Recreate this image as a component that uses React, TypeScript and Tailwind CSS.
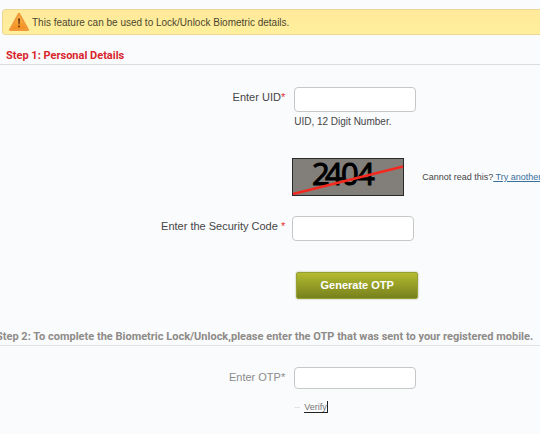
import type { ReactNode } from 'react'

const FIELD = 'block w-[122px] rounded-[4px] border border-[#c6c8c8] bg-white px-2 text-xs text-[#333] outline-none focus:border-[#8a9a2a]'
const HEADING = 'whitespace-nowrap border-b font-[Roboto,Arial,sans-serif] text-[11px] font-bold leading-4'

/** One form line: right-aligned label on the left, control on the right. */
function Row({ label, className = '', children }: { label?: ReactNode; className?: string; children: ReactNode }) {
  return (
    <div className={`grid grid-cols-[53%_minmax(0,1fr)] items-start ${className}`}>
      <div className="pr-px text-right text-[11px] leading-5">{label}</div>
      <div className="min-w-0">{children}</div>
    </div>
  )
}

function WarningIcon() {
  return (
    <svg width="22" height="20" viewBox="0 0 22 20" aria-hidden="true" className="shrink-0">
      <defs>
        <linearGradient id="warn" x1="0" y1="0" x2="0" y2="1">
          <stop offset="0" stopColor="#fdbe55" />
          <stop offset="1" stopColor="#f28a1c" />
        </linearGradient>
      </defs>
      <path d="M11 1.8 L20 17.8 H2 Z" fill="url(#warn)" stroke="#f09a3a" strokeWidth="2.2" strokeLinejoin="round" />
      <path d="M10.1 6.4 H12 L11.5 12.4 H10.6 Z" fill="#5a2c08" />
      <circle cx="11.05" cy="14.4" r="0.9" fill="#5a2c08" />
    </svg>
  )
}

function Captcha() {
  return (
    <svg width="112" height="38" viewBox="0 0 112 38" role="img" aria-label="Security code" className="block shrink-0">
      <rect x="0.5" y="0.5" width="111" height="37" fill="#827f7b" stroke="#2a2a2a" />
      {/* the digits run into each other on purpose */}
      <text x="20 33 49 65" y="27" fontSize="31" fill="#000" stroke="#000" strokeWidth="1.1" fontFamily="'Open Sans', 'Noto Sans', sans-serif">
        2404
      </text>
      <path d="M1 36 L111 8.5" stroke="#f3291f" strokeWidth="2.4" />
    </svg>
  )
}

export default function App() {
  return (
    <main className="min-h-screen overflow-hidden bg-[#fafbfd] pt-[9px] font-['Liberation_Sans',Arial,sans-serif] text-[10px] text-[#454545]">
      <div className="ml-[2px] flex h-[26px] items-center gap-[2px] rounded-l-[4px] border border-r-0 border-[#edd596] bg-linear-to-b from-[#ffe99a] to-[#fff09c] pl-[5px]" role="alert">
        <WarningIcon />
        <span className="whitespace-nowrap text-[#4c4630]">This feature can be used to Lock/Unlock Biometric details.</span>
      </div>

      <form onSubmit={(e) => e.preventDefault()}>
        <h2 className={`mt-[13px] border-[#dcdddf] pl-[6px] text-[#d8262c] ${HEADING}`}>
          Step 1: Personal Details
        </h2>

        <Row
          className="mt-[22px]"
          label={<label htmlFor="uid">Enter UID<span className="text-[#e03030]">*</span></label>}
        >
          <div className="pl-2">
            <input id="uid" type="text" className={`${FIELD} h-[25px]`} />
            <p className="leading-5">UID, 12 Digit Number.</p>
          </div>
        </Row>

        <Row className="mt-[26px]">
          <div className="flex items-center pl-[6px]">
            <Captcha />
            <p className="ml-[18px] whitespace-nowrap text-[9px] leading-4">
              Cannot read this?
              <a href="#another" className="text-[#3a6f9c] underline"> Try another</a>
            </p>
          </div>
        </Row>

        <Row
          className="mt-5"
          label={<label htmlFor="code">Enter the Security Code <span className="text-[#e03030]">*</span></label>}
        >
          <div className="pl-[6px]">
            <input id="code" type="text" className={`${FIELD} h-[25px]`} />
          </div>
        </Row>

        <Row className="mt-[31px]">
          <div className="pl-[10px]">
            <button
              type="submit"
              className="block h-[27px] w-[122px] rounded-[2px] border border-[#97a035] bg-linear-to-b from-[#b5bb30] to-[#76811d] text-[11px] font-bold text-white shadow-[0_0_2px_#a9ac88]"
            >
              Generate OTP
            </button>
          </div>
        </Row>
      </form>

      <form onSubmit={(e) => e.preventDefault()} className="text-[#8c8c8c]">
        <h2 className={`-ml-[4px] mt-[30px] border-[#e2e3e5] text-[#8e8b88] ${HEADING}`}>
          Step 2: To complete the Biometric Lock/Unlock,please enter the OTP that was sent to your registered mobile.
        </h2>

        <Row className="mt-[21px]" label={<label htmlFor="otp">Enter OTP*</label>}>
          <div className="pl-2">
            <input id="otp" type="text" className={`${FIELD} h-[22px]`} />
            <div className="mt-3 flex items-center">
              <span className="w-[10px] text-[9px] leading-3 text-[#d4d4d4]" aria-hidden="true">--</span>
              <button type="submit" className="h-3 border-b border-r border-[#222] text-[9px] leading-[10px] text-[#777]">
                Verify
              </button>
            </div>
          </div>
        </Row>
      </form>
    </main>
  )
}
